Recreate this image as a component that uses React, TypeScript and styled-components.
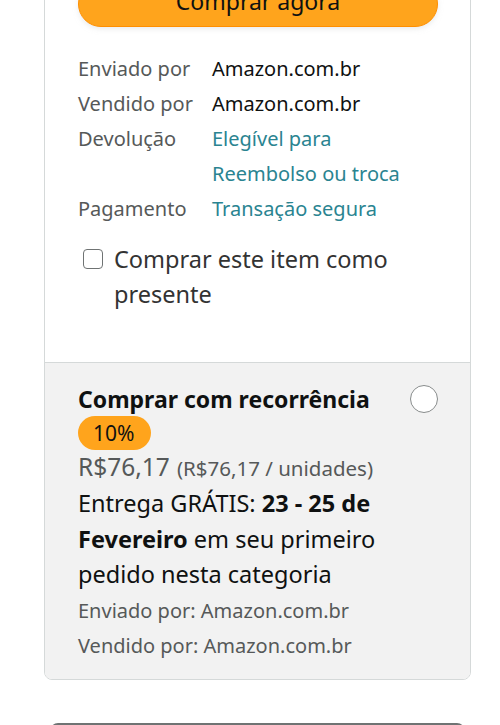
import React from "react";
import styled, { createGlobalStyle } from "styled-components";

const GlobalStyle = createGlobalStyle`
  body {
    margin: 0;
    background: #fff;
    font-family: "Noto Sans", "Liberation Sans", sans-serif;
    color: #0f1111;
  }
`;

const Page = styled.div`
  width: 500px;
  height: 725px;
  overflow: hidden;
  padding: 0 29px 0 44px;
  box-sizing: border-box;
`;

const Card = styled.div`
  margin-top: -20px;
  border: 1px solid #d5d9d9;
  border-radius: 8px;
  overflow: hidden;
  width: 427px;
  box-sizing: border-box;
`;

const BuySection = styled.div`
  background: #fff;
  padding: 0 32px 50px 33px;
`;

const BuyButton = styled.button`
  display: block;
  width: 360px;
  height: 46px;
  border: 1px solid #ff8f00;
  border-radius: 23px;
  background: #ffa41c;
  box-shadow: 0 2px 5px rgba(213, 217, 217, 0.5);
  font-family: inherit;
  font-size: 23px;
  color: #0f1111;
  padding: 0 0 6px;
`;

const Details = styled.div`
  display: grid;
  grid-template-columns: 134px 1fr;
  margin-top: 24px;
  font-size: 20px;
  line-height: 35px;
`;

const Label = styled.div`
  color: #565959;
`;

const Value = styled.div<{ $link?: boolean }>`
  color: ${(p) => (p.$link ? "#2a8491" : "#0f1111")};
`;

const GiftRow = styled.label`
  display: flex;
  align-items: flex-start;
  gap: 11px;
  margin: 16px 0 0 5px;
  font-size: 23.5px;
  line-height: 35px;
  color: #333;
`;

const Box = styled.span`
  flex: none;
  width: 20px;
  height: 20px;
  margin-top: 7px;
  border: 1.5px solid #6f7373;
  border-radius: 4px;
  background: #fff;
  box-sizing: border-box;
`;

const SubSection = styled.div`
  background: #f2f2f2;
  border-top: 1px solid #d5d9d9;
  padding: 19px 32px 15px 33px;
`;

const TitleRow = styled.div`
  display: flex;
  justify-content: space-between;
  align-items: flex-start;
`;

const Title = styled.div`
  font-size: 23px;
  font-weight: 700;
  line-height: 34px;
`;

const Radio = styled.span`
  flex: none;
  width: 28px;
  height: 28px;
  margin-top: 3px;
  border: 1.5px solid #888c8c;
  border-radius: 50%;
  background: #fff;
  box-sizing: border-box;
`;

const Badge = styled.div`
  display: inline-block;
  background: #ffa41c;
  border-radius: 17px;
  padding: 0 17px 0 15px;
  font-size: 21px;
  line-height: 34px;
  color: #0f1111;
`;

const PriceRow = styled.div`
  color: #565959;
  line-height: 34px;
`;

const Price = styled.span`
  font-size: 24.5px;
`;

const Unit = styled.span`
  font-size: 20.5px;
  margin-left: 7px;
`;

const Delivery = styled.div`
  margin-top: -1px;
  font-size: 23.5px;
  line-height: 35.5px;
  b {
    font-weight: 700;
  }
`;

const Small = styled.div`
  font-size: 20px;
  line-height: 35.5px;
  color: #565959;
`;

const NextBox = styled.div`
  margin: 43px 6px 0 6px;
  height: 40px;
  border-top: 2px solid #6f7373;
  border-radius: 8px 8px 0 0;
`;

const rows: { label: string; value: React.ReactNode; link?: boolean }[] = [
  { label: "Enviado por", value: "Amazon.com.br" },
  { label: "Vendido por", value: "Amazon.com.br" },
  {
    label: "Devolução",
    value: (
      <>
        Elegível para
        <br />
        Reembolso ou troca
      </>
    ),
    link: true,
  },
  { label: "Pagamento", value: "Transação segura", link: true },
];

export default function App() {
  return (
    <>
      <GlobalStyle />
      <Page>
        <Card>
          <BuySection>
            <BuyButton>Comprar agora</BuyButton>
            <Details>
              {rows.map((r) => (
                <React.Fragment key={r.label}>
                  <Label>{r.label}</Label>
                  <Value $link={r.link}>{r.value}</Value>
                </React.Fragment>
              ))}
            </Details>
            <GiftRow>
              <Box />
              <span>
                Comprar este item como
                <br />
                presente
              </span>
            </GiftRow>
          </BuySection>
          <SubSection>
            <TitleRow>
              <Title>Comprar com recorrência</Title>
              <Radio />
            </TitleRow>
            <Badge>10%</Badge>
            <PriceRow>
              <Price>R$76,17</Price>
              <Unit>(R$76,17 / unidades)</Unit>
            </PriceRow>
            <Delivery>
              Entrega GRÁTIS: <b>23 - 25 de</b>
              <br />
              <b>Fevereiro</b> em seu primeiro
              <br />
              pedido nesta categoria
            </Delivery>
            <Small>Enviado por: Amazon.com.br</Small>
            <Small>Vendido por: Amazon.com.br</Small>
          </SubSection>
        </Card>
        <NextBox />
      </Page>
    </>
  );
}
